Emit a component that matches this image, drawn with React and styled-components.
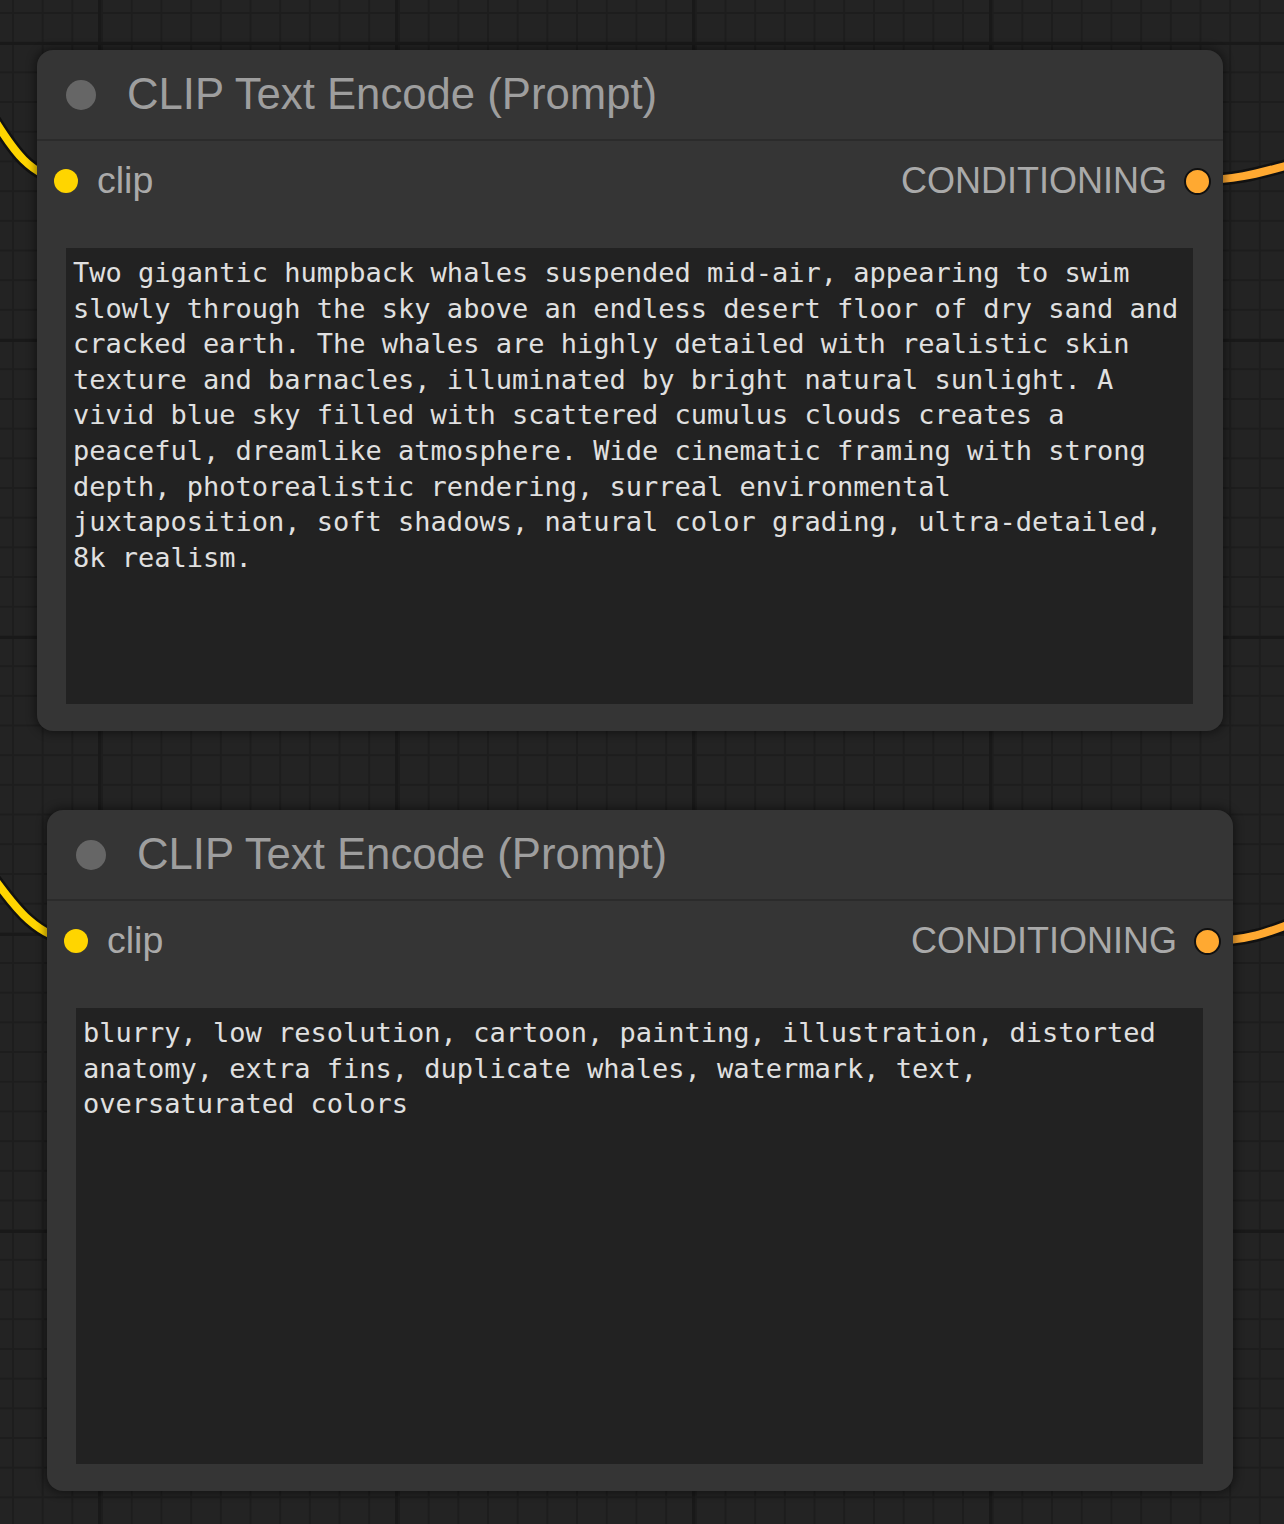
import React from "react";
import styled, { createGlobalStyle } from "styled-components";

const GlobalStyle = createGlobalStyle`
  html, body {
    margin: 0;
    padding: 0;
    background: #232323;
  }
`;

const Canvas = styled.div`
  position: relative;
  width: 1284px;
  height: 1524px;
  overflow: hidden;
  background-color: #232323;
  background-image:
    linear-gradient(to right, #191919 3px, transparent 3px),
    linear-gradient(to bottom, #191919 3px, transparent 3px),
    linear-gradient(to right, #1d1d1d 2px, transparent 2px),
    linear-gradient(to bottom, #1d1d1d 2px, transparent 2px);
  background-size: 297px 297px, 297px 297px, 29.7px 29.7px, 29.7px 29.7px;
  background-position: 98px 42px, 98px 42px, 12px 12px, 12px 12px;
  font-family: "Liberation Sans", Arial, sans-serif;
`;

const Wires = styled.svg`
  position: absolute;
  left: 0;
  top: 0;
  width: 1284px;
  height: 1524px;
  pointer-events: none;
`;

const Node = styled.div`
  position: absolute;
  left: ${(p) => p.$x}px;
  top: ${(p) => p.$y}px;
  width: 1186px;
  height: 681px;
  box-sizing: border-box;
  display: flex;
  flex-direction: column;
  background: #353535;
  border-radius: 16px;
  box-shadow: 0 0 10px 2px rgba(0, 0, 0, 0.45);
`;

const Header = styled.div`
  height: 89px;
  display: flex;
  align-items: center;
  gap: 31px;
  padding-left: 29px;
  border-bottom: 2px solid #2b2b2b;
`;

const StatusDot = styled.span`
  width: 30px;
  height: 30px;
  border-radius: 50%;
  background: #666666;
  flex: none;
`;

const Title = styled.span`
  font-size: 43.7px;
  color: #9e9e9e;
  white-space: nowrap;
  line-height: 1;
  margin-top: -2px;
`;

const SlotRow = styled.div`
  height: 80px;
  display: flex;
  align-items: center;
  justify-content: space-between;
  padding: 0 12px 0 17px;
  margin-bottom: 27px;
`;

const Slot = styled.div`
  display: flex;
  align-items: center;
  gap: ${(p) => (p.$out ? 17 : 19)}px;
`;

const SlotDot = styled.span`
  width: ${(p) => p.$size}px;
  height: ${(p) => p.$size}px;
  box-sizing: border-box;
  border-radius: 50%;
  background: ${(p) => p.$color};
  border: ${(p) => (p.$ring ? "2px solid #111" : "none")};
  flex: none;
`;

const SlotLabel = styled.span`
  font-size: ${(p) => (p.$out ? 36 : 37.5)}px;
  color: #aaaaaa;
  line-height: 1;
`;

const PromptBox = styled.div`
  flex: 1;
  margin: 0 30px 27px 29px;
  padding: 7px 7px;
  background: #222222;
  color: #e0e0e0;
  font-family: "DejaVu Sans Mono", "Liberation Mono", monospace;
  font-size: 27px;
  line-height: 35.6px;
  white-space: pre-wrap;
  word-wrap: break-word;
`;

const positive =
  "Two gigantic humpback whales suspended mid-air, appearing to swim slowly through the sky above an endless desert floor of dry sand and cracked earth. The whales are highly detailed with realistic skin texture and barnacles, illuminated by bright natural sunlight. A vivid blue sky filled with scattered cumulus clouds creates a peaceful, dreamlike atmosphere. Wide cinematic framing with strong depth, photorealistic rendering, surreal environmental juxtaposition, soft shadows, natural color grading, ultra-detailed, 8k realism.";

const negative =
  "blurry, low resolution, cartoon, painting, illustration, distorted anatomy, extra fins, duplicate whales, watermark, text, oversaturated colors";

const wires = [
  { d: "M -20 98 C 5 133, 20 175, 66 181", color: "#FFD500" },
  { d: "M -20 860 C 8 895, 28 936, 76 942", color: "#FFD500" },
  { d: "M 1197 180 C 1240 180, 1262 172, 1300 162", color: "#FFA931" },
  { d: "M 1207 941 C 1250 941, 1272 931, 1300 920", color: "#FFA931" },
];

const ClipNode = ({ x, y, text }) => (
  <Node $x={x} $y={y}>
    <Header>
      <StatusDot />
      <Title>CLIP Text Encode (Prompt)</Title>
    </Header>
    <SlotRow>
      <Slot>
        <SlotDot $size={24} $color="#FFD500" />
        <SlotLabel>clip</SlotLabel>
      </Slot>
      <Slot $out>
        <SlotLabel $out>CONDITIONING</SlotLabel>
        <SlotDot $size={27} $color="#FFA931" $ring />
      </Slot>
    </SlotRow>
    <PromptBox>{text}</PromptBox>
  </Node>
);

export default function App() {
  return (
    <>
      <GlobalStyle />
      <Canvas>
        <Wires viewBox="0 0 1284 1524">
          {wires.map((w, i) => (
            <g key={i} fill="none" strokeLinecap="round">
              <path d={w.d} stroke="#111" strokeWidth="13" />
              <path d={w.d} stroke={w.color} strokeWidth="8" />
            </g>
          ))}
        </Wires>
        <ClipNode x={37} y={50} text={positive} />
        <ClipNode x={47} y={810} text={negative} />
      </Canvas>
    </>
  );
}
